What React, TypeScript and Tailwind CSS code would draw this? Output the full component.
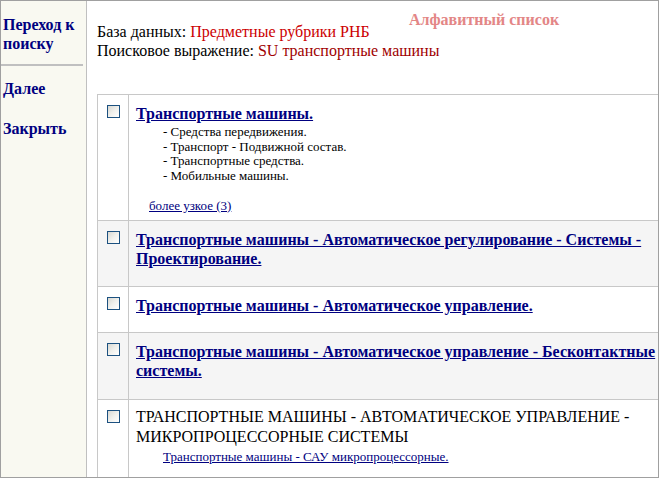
import React from "react";

function Box() {
  return (
    <div className="w-[13px] h-[13px] border border-[#1c5180] bg-gradient-to-br from-[#d8d8d2] via-[#f0f0ec] to-white" />
  );
}

function Row({
  gray,
  height,
  textTop = "pt-[9px]",
  children,
}: {
  gray?: boolean;
  height?: string;
  textTop?: string;
  children: React.ReactNode;
}) {
  return (
    <div className={`flex border-b border-[#c8c8c8] ${gray ? "bg-[#f5f5f5]" : "bg-white"} ${height ?? ""}`}>
      <div className="w-[31px] shrink-0 border-r border-[#c8c8c8] flex justify-center pt-[10px]">
        <Box />
      </div>
      <div className={`flex-1 pl-[7px] ${textTop}`}>{children}</div>
    </div>
  );
}

function Title({ lines }: { lines: string[] }) {
  return (
    <div className="font-bold text-[16px] leading-[19px] text-[#000080] whitespace-nowrap">
      {lines.map((l, i) => (
        <div key={i}>
          <a className="underline" href="#">
            {l}
          </a>
        </div>
      ))}
    </div>
  );
}

export default function App() {
  return (
    <div className="w-[659px] h-[478px] border border-[#a0a0a0] flex overflow-hidden bg-white text-black font-['Liberation_Serif','Times_New_Roman',serif] leading-[19px]">
      <div className="w-[86px] shrink-0 bg-[#f9f9f1] border-r border-[#c0c0c0] pt-[14px]">
        <div className="pl-[2px] font-bold text-[16px] leading-[19px] text-[#000080]">
          <a href="#">
            Переход к<br />поиску
          </a>
        </div>
        <div className="mt-[11px] h-[2px] w-[83px] bg-[#c0c0c0] -ml-[1px]" />
        <div className="pl-[2px] mt-[13px] font-bold text-[16px] leading-[19px] text-[#000080]">
          <a href="#">Далее</a>
        </div>
        <div className="pl-[2px] mt-[21px] font-bold text-[16px] leading-[19px] text-[#000080]">
          <a href="#">Закрыть</a>
        </div>
      </div>
      <div className="flex-1 overflow-hidden pl-[10px]">
        <div className="grid pt-[9px]">
          <div className="col-start-1 row-start-1 pl-[312px] font-bold text-[16px] leading-[19px] text-[#e38686] whitespace-nowrap">
            Алфавитный список
          </div>
          <div className="col-start-1 row-start-1 pt-[12px] text-[16px] leading-[19px] whitespace-nowrap">
            <div>
              База данных: <span className="text-[#cc0000]">Предметные рубрики РНБ</span>
            </div>
            <div>
              Поисковое выражение: <span className="text-[#a00000]">SU транспортные машины</span>
            </div>
          </div>
        </div>
        <div className="mt-[34px] w-[620px] border-l border-t border-[#c8c8c8]">
          <Row height="h-[126px]">
            <Title lines={["Транспортные машины."]} />
            <div className="pl-[27px] pt-[2px] text-[13px] leading-[14.5px] whitespace-nowrap">
              <div>- Средства передвижения.</div>
              <div>- Транспорт - Подвижной состав.</div>
              <div>- Транспортные средства.</div>
              <div>- Мобильные машины.</div>
            </div>
            <div className="pl-[13px] pt-[16px] text-[13px] leading-[14.5px]">
              <a href="#" className="text-[#000080] underline">
                более узкое (3)
              </a>
            </div>
          </Row>
          <Row gray height="h-[66px]">
            <Title lines={["Транспортные машины - Автоматическое регулирование - Системы -", "Проектирование."]} />
          </Row>
          <Row height="h-[46px]">
            <Title lines={["Транспортные машины - Автоматическое управление."]} />
          </Row>
          <Row gray height="h-[67px]">
            <Title lines={["Транспортные машины - Автоматическое управление - Бесконтактные", "системы."]} />
          </Row>
          <Row textTop="pt-[7px]" height="h-[90px]">
            <div className="text-[16px] leading-[20px] whitespace-nowrap">
              <div>ТРАНСПОРТНЫЕ МАШИНЫ - АВТОМАТИЧЕСКОЕ УПРАВЛЕНИЕ -</div>
              <div>МИКРОПРОЦЕССОРНЫЕ СИСТЕМЫ</div>
            </div>
            <div className="pl-[27px] pt-[3px] text-[13px] leading-[14.5px] whitespace-nowrap">
              <a href="#" className="text-[#000080] underline">
                Транспортные машины - САУ микропроцессорные.
              </a>
            </div>
          </Row>
        </div>
      </div>
    </div>
  );
}
